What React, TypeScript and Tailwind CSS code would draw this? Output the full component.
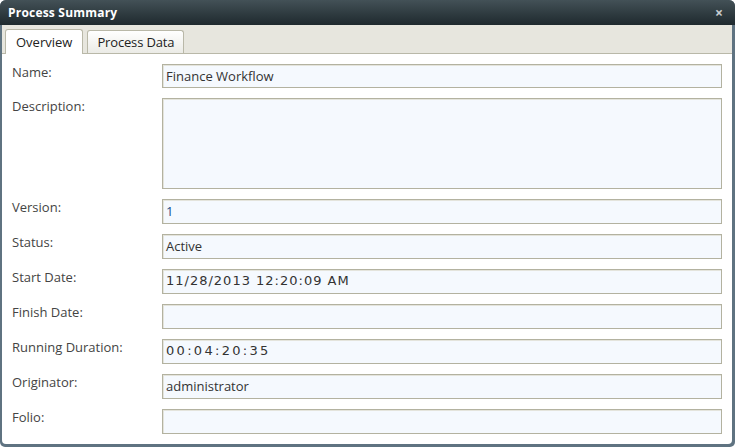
import React from "react";

const fields: { label: string; value: string; h: string; blue?: boolean; num?: string }[] = [
  { label: "Name:", value: "Finance Workflow", h: "h-[24px]" },
  { label: "Description:", value: "", h: "h-[91px]" },
  { label: "Version:", value: "1", h: "h-[25px]", blue: true },
  { label: "Status:", value: "Active", h: "h-[25px]" },
  { label: "Start Date:", value: "11/28/2013 12:20:09 AM", h: "h-[25px]", num: "tracking-[1px]" },
  { label: "Finish Date:", value: "", h: "h-[25px]" },
  { label: "Running Duration:", value: "00:04:20:35", h: "h-[25px]", num: "tracking-[2.3px]" },
  { label: "Originator:", value: "administrator", h: "h-[25px]" },
  { label: "Folio:", value: "", h: "h-[25px]" },
];

export default function App() {
  return (
    <div
      className="w-[735px] h-[447px] bg-white"
      style={{ fontFamily: '"Open Sans", "DejaVu Sans", sans-serif' }}
    >
      <div className="w-full h-full flex flex-col bg-[#5f7381] rounded-t-[6px] rounded-b-[5px] overflow-hidden">
        <div className="h-[25px] shrink-0 flex items-center justify-between pl-[8px] pr-[12px] bg-gradient-to-b from-[#435157] to-[#1f2a2e]">
          <span className="text-white font-bold text-[12px] leading-none tracking-[0.2px]">
            Process Summary
          </span>
          <span className="text-[#c8cdd0] text-[14px] font-bold leading-none">×</span>
        </div>
        <div className="flex-1 ml-[2px] mr-[3px] mb-[3px] bg-white rounded-b-[4px] flex flex-col overflow-hidden">
          <div className="h-[29px] shrink-0 bg-[#e7e6de] border-b border-[#b9b8a8] flex items-end pl-[3px] gap-[4px]">
            <div className="h-[25px] -mb-px px-[10px] pt-[3px] bg-white border border-b-0 border-[#b9b8a8] rounded-t-[3px] text-[13px] text-[#222] leading-[18px]">
              Overview
            </div>
            <div className="h-[23px] px-[9px] pt-[2px] bg-gradient-to-b from-white to-[#ebebe6] border border-b-0 border-[#b9b8a8] rounded-t-[3px] text-[13px] text-[#222] leading-[18px] tracking-[-0.15px]">
              Process Data
            </div>
          </div>
          <div className="flex-1 flex flex-col pt-[10px] pl-[10px] pr-[10px] gap-[10px]">
            {fields.map((f) => (
              <div key={f.label} className="flex">
                <div className="w-[150px] shrink-0 text-[13px] text-[#444] leading-[17px]">
                  {f.label}
                </div>
                <div
                  className={`flex-1 border border-[#b3b2a0] bg-[#f5f9fe] shadow-[inset_1px_1px_0_#e4e4dc] px-[3px] text-[13px] leading-[22px] whitespace-nowrap ${f.h} ${
                    f.blue ? "text-[#1a4f8b]" : "text-[#333]"
                  } ${f.num ? `font-['DejaVu_Sans'] ${f.num}` : ""}`}
                >
                  {f.value}
                </div>
              </div>
            ))}
          </div>
        </div>
      </div>
    </div>
  );
}
